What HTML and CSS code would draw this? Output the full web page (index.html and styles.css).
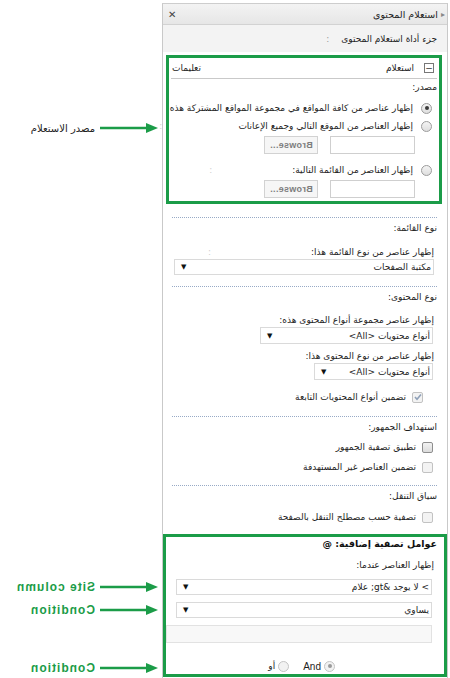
FILE: index.html
```html
<!DOCTYPE html>
<html lang="ar">
<head>
<meta charset="utf-8">
<link rel="stylesheet" href="styles.css">
</head>
<body>
<div class="page">
  <div class="callout c-source"><span class="c-text ar">مصدر الاستعلام</span><svg class="arrow" width="58" height="10" viewBox="0 0 58 10"><line x1="0" y1="5" x2="48" y2="5"/><polygon points="46,0 58,5 46,10"/></svg></div>
  <div class="callout c-site"><span class="c-text en mirror">Site column</span><svg class="arrow" width="58" height="10" viewBox="0 0 58 10"><line x1="0" y1="5" x2="48" y2="5"/><polygon points="46,0 58,5 46,10"/></svg></div>
  <div class="callout c-cond1"><span class="c-text en mirror">Condition</span><svg class="arrow" width="58" height="10" viewBox="0 0 58 10"><line x1="0" y1="5" x2="48" y2="5"/><polygon points="46,0 58,5 46,10"/></svg></div>
  <div class="callout c-cond2"><span class="c-text en mirror">Condition</span><svg class="arrow" width="58" height="10" viewBox="0 0 58 10"><line x1="0" y1="5" x2="48" y2="5"/><polygon points="46,0 58,5 46,10"/></svg></div>

  <div class="panel" dir="rtl">
    <div class="hdr">
      <span class="hdr-title"><span class="tri">&#9656;</span>استعلام المحتوى</span>
      <span class="close">&#10005;</span>
    </div>
    <div class="titlerow"><span>جزء أداة استعلام المحتوى</span><span class="faint colon1">:</span></div>

    <div class="gbox g1">
      <div class="qhead">
        <span class="qhead-r"><span class="minus">&#8722;</span><span>استعلام</span></span>
        <span>تعليمات</span>
      </div>
      <div class="row lbl-row">مصدر:</div>
      <div class="row radio-row r1"><span class="radio on"></span><span>إظهار عناصر من كافة المواقع في مجموعة المواقع المشتركة هذه</span></div>
      <div class="row radio-row r2"><span class="radio"></span><span>إظهار العناصر من الموقع التالي وجميع الإعانات</span><span class="faint colon2">:</span></div>
      <div class="browse-row"><span class="textbox"></span><span class="browse"><span class="mirror" dir="ltr">Browse...</span></span></div>
      <div class="row radio-row r3"><span class="radio"></span><span>إظهار العناصر من القائمة التالية:</span><span class="faint colon3">:</span></div>
      <div class="browse-row"><span class="textbox"></span><span class="browse"><span class="mirror" dir="ltr">Browse...</span></span></div>
    </div>

    <div class="sep s1"></div>
    <div class="row sec">نوع القائمة:</div>
    <div class="row sub m8">إظهار عناصر من نوع القائمة هذا:<span class="faint colon4">:</span></div>
    <div class="select sel-list"><span>مكتبة الصفحات</span><span class="dd">&#9660;</span></div>

    <div class="sep s2"></div>
    <div class="row sec">نوع المحتوى:</div>
    <div class="row sub m7">إظهار عناصر مجموعة أنواع المحتوى هذه:</div>
    <div class="select sel-group"><span>أنواع محتويات &lt;All&gt;</span><span class="dd">&#9660;</span></div>
    <div class="row sub m4">إظهار عناصر من نوع المحتوى هذا:</div>
    <div class="select sel-type"><span>أنواع محتويات &lt;All&gt;</span><span class="dd">&#9660;</span></div>
    <div class="row cb-row cb-indent m9"><span class="cb checked dis"><svg width="8" height="8" viewBox="0 0 8 8"><path d="M1 4 L3 6.2 L7 1.5"/></svg></span><span>تضمين أنواع المحتويات التابعة</span></div>

    <div class="sep s3"></div>
    <div class="row sec">استهداف الجمهور:</div>
    <div class="row cb-row m4"><span class="cb"></span><span>تطبيق تصفية الجمهور</span></div>
    <div class="row cb-row m4"><span class="cb dis"></span><span>تضمين العناصر غير المستهدفة</span></div>

    <div class="sep s4"></div>
    <div class="row sec">سياق التنقل:</div>
    <div class="row cb-row m5"><span class="cb dis"></span><span>تصفية حسب مصطلح التنقل بالصفحة</span></div>

    <div class="gbox g2">
      <div class="row g2-title">عوامل تصفية إضافية: @</div>
      <div class="row g2-sub">إظهار العناصر عندما:</div>
      <div class="select sel-wide sel-col"><span>&gt; لا يوجد &amp;gt; علام</span><span class="dd">&#9660;</span></div>
      <div class="select sel-wide sel-op"><span>يساوي</span><span class="dd">&#9660;</span></div>
      <div class="valuebox"></div>
      <div class="row andor"><span class="radio on dis"></span><span class="en">And</span><span class="radio dis gap"></span><span>أو</span></div>
    </div>
  </div>
</div>
</body>
</html>
```

FILE: styles.css
```css
html, body {
  margin: 0;
  padding: 0;
  background: #ffffff;
}
body {
  font-family: "DejaVu Sans", sans-serif;
  font-size: 9px;
  color: #1e1e1e;
  white-space: nowrap;
}
.page {
  position: relative;
  width: 450px;
  height: 678px;
  overflow: hidden;
}

/* callouts */
.callout {
  position: absolute;
  left: 0;
  width: 158px;
  height: 14px;
  display: flex;
  align-items: center;
  justify-content: flex-end;
  gap: 5px;
}
.c-source { top: 121px; }
.c-site { top: 580px; }
.c-cond1 { top: 603px; }
.c-cond2 { top: 661px; }
.c-text.ar {
  font-size: 10px;
  color: #222;
}
.c-text.en {
  font-family: "Liberation Sans", sans-serif;
  font-weight: bold;
  font-size: 12px;
  letter-spacing: 1px;
  color: #1b9c48;
}
.mirror {
  display: inline-block;
  transform: scaleX(-1);
}
.arrow line { stroke: #1b9c48; stroke-width: 2.6; }
.arrow polygon { fill: #1b9c48; }

/* panel */
.panel {
  margin-left: 162px;
  margin-top: 3px;
  width: 284px;
  height: 675px;
  border-left: 1px solid #c9c9c9;
  border-right: 1px solid #c9c9c9;
  border-top: 1px solid #cdcdcd;
}
.hdr {
  height: 20px;
  background: linear-gradient(#f3f3f3, #e6e6e6);
  border-bottom: 1px solid #d2d2d2;
  display: flex;
  align-items: center;
  justify-content: space-between;
  padding: 0 2px 0 5px;
}
.hdr-title { display: flex; align-items: center; gap: 3px; font-size: 9.5px; }
.tri { color: #888; font-size: 8px; }
.close { font-size: 10px; font-weight: bold; color: #444; }
.titlerow {
  height: 27px;
  background: #f3f3f3;
  display: flex;
  align-items: center;
  padding-right: 10px;
}
.faint { color: #cfcfcf; }
.colon1 { margin-right: 12px; color: #9a9a9a; }
.colon2 { margin-right: 68px; }
.colon3 { margin-right: 72px; }
.colon4 { margin-right: 100px; }

.gbox { border: 3px solid #1b9c48; }
.g1 {
  margin: 3px 5px 0 3px;
  padding: 0 0 3px 0;
}
.qhead {
  height: 20px;
  margin: 0 2px;
  border-bottom: 1px solid #c9c9c9;
  display: flex;
  align-items: center;
  justify-content: space-between;
  padding: 0 3px 0 1px;
}
.qhead-r { display: flex; align-items: center; gap: 10px; }
.minus {
  width: 8px;
  height: 8px;
  border: 1px solid #777;
  display: flex;
  align-items: center;
  justify-content: center;
  font-size: 9px;
  line-height: 1;
  color: #333;
  background: #fff;
}
.row { display: flex; align-items: center; height: 16px; }
.lbl-row { padding-right: 2px; }
.radio-row { height: 18px; gap: 8px; padding-right: 7px; }
.r1 { margin-top: 4px; }
.r3 { margin-top: 7px; }
.radio {
  width: 9px;
  height: 9px;
  border-radius: 50%;
  border: 1px solid #9b9b9b;
  background: linear-gradient(#f4f4f4, #dedede);
  display: inline-flex;
  align-items: center;
  justify-content: center;
  flex: none;
}
.radio.on::after {
  content: "";
  width: 4px;
  height: 4px;
  border-radius: 50%;
  background: #3a3a3a;
}
.radio.dis { border-color: #c4c4c4; background: #f2f2f2; }
.radio.dis.on::after { background: #9a9a9a; }
.browse-row {
  display: flex;
  gap: 12px;
  margin-top: 1px;
  padding-right: 24px;
  height: 18px;
}
.textbox {
  width: 83px;
  height: 16px;
  border: 1px solid #cfcfcf;
  background: #fff;
}
.browse {
  width: 52px;
  height: 16px;
  border: 1px solid #d2d2d2;
  background: #f6f6f6;
  display: flex;
  align-items: center;
  justify-content: center;
  font-family: "Liberation Sans", sans-serif;
  font-weight: bold;
  font-size: 9px;
  color: #7d7d7d;
  letter-spacing: 0.3px;
}

.sep {
  border-top: 1px dotted #98aac6;
  margin: 0 10px 0 9px;
}
.s1 { margin-top: 13px; }
.s2 { margin-top: 11px; }
.s3 { margin-top: 11px; }
.s4 { margin-top: 10px; }
.sec { margin-top: 2px; padding-right: 10px; }
.sub { padding-right: 13px; height: 15px; }
.m4 { margin-top: 4px; }
.m5 { margin-top: 5px; }
.m7 { margin-top: 7px; }
.m8 { margin-top: 8px; }
.m9 { margin-top: 9px; }

.select {
  height: 14px;
  border: 1px solid #dadada;
  background: #fff;
  display: flex;
  align-items: center;
  justify-content: space-between;
  padding: 0 2px 0 6px;
}
.dd { font-size: 7px; color: #111; }
.sel-list { margin: 0 13px 0 11px; }
.sel-group { margin-right: 14px; width: 163px; height: 15px; }
.sel-type { margin-right: 14px; width: 109px; height: 15px; }

.cb-row { gap: 6px; padding-right: 14px; }
.cb-indent { padding-right: 24px; }
.cb {
  width: 9px;
  height: 9px;
  border: 1px solid #8e8e8e;
  border-radius: 2px;
  background: linear-gradient(#f2f2f2, #dcdcdc);
  display: inline-flex;
  align-items: center;
  justify-content: center;
  flex: none;
}
.cb.dis { border-color: #c2c2c2; background: #f3f3f3; }
.cb svg path { fill: none; stroke: #8ea0b8; stroke-width: 1.6; }

.g2 {
  margin-top: 9px;
  height: 137px;
}
.g2-title {
  height: 12px;
  padding-right: 7px;
  font-weight: bold;
  font-size: 9.5px;
  color: #111;
}
.g2-sub { margin-top: 8px; padding-right: 10px; }
.sel-wide { margin: 0 12px 0 10px; }
.sel-col { margin-top: 6px; }
.sel-op { margin-top: 7px; }
.valuebox {
  margin: 7px 12px 0 0;
  height: 16px;
  border: 1px solid #e2e2e2;
  background: #f8f8f8;
}
.andor {
  margin-top: 15px;
  padding-right: 109px;
  gap: 3px;
}
.andor .en { font-family: "Liberation Sans", sans-serif; font-size: 10px; }
.andor .gap { margin-right: 11px; }
```
